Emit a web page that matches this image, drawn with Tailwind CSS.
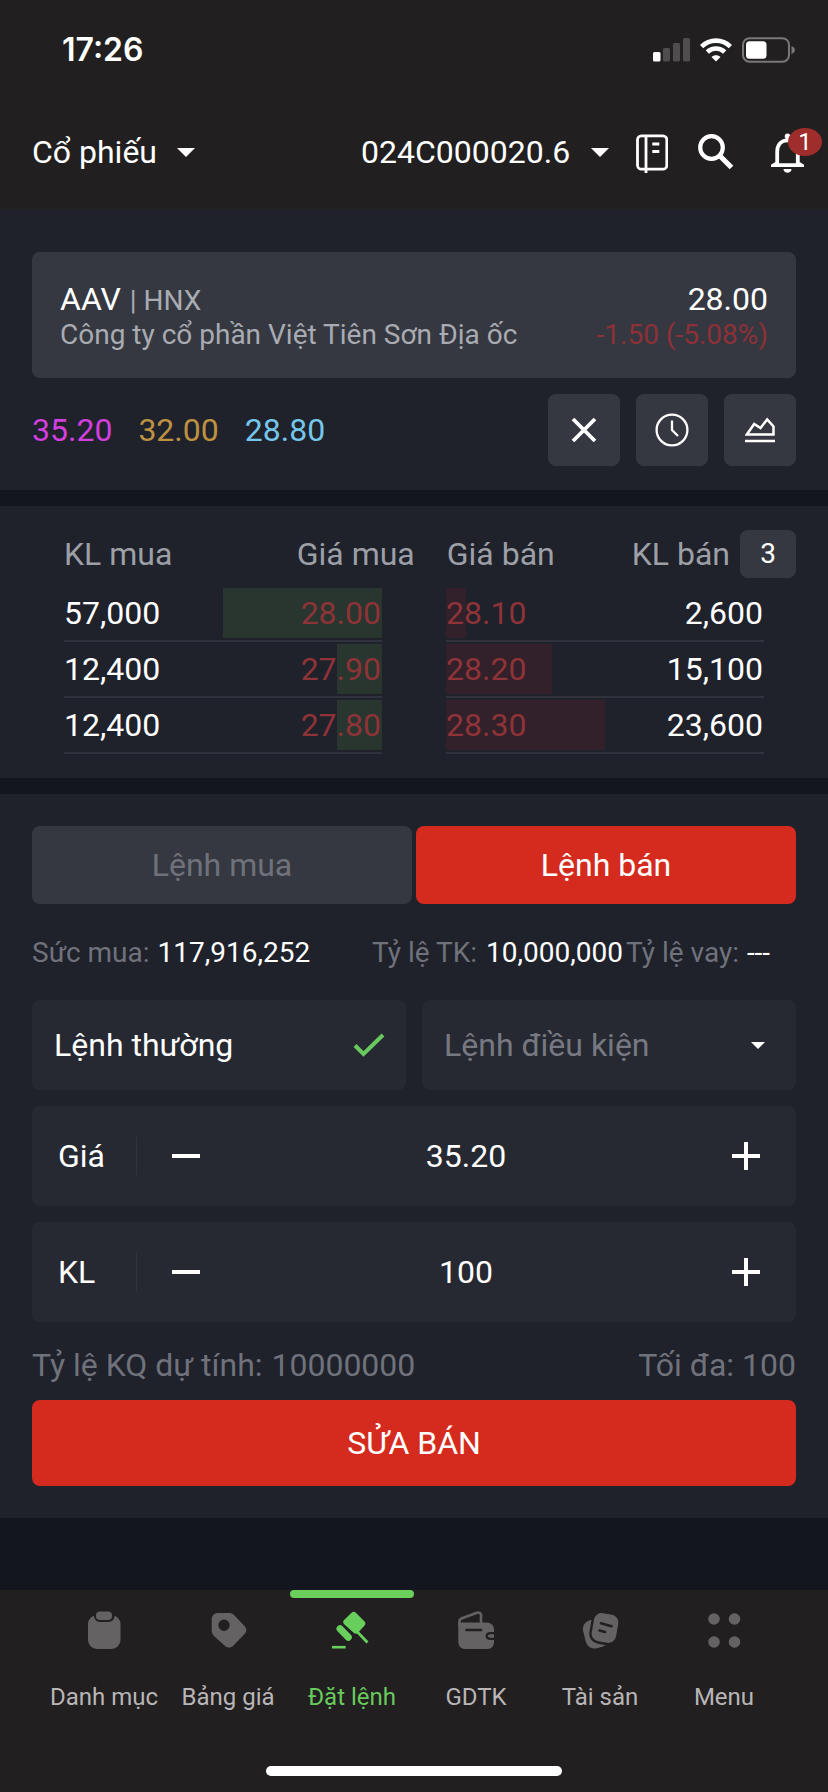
<!DOCTYPE html>
<html lang="vi">
<head>
<meta charset="utf-8">
<title>Đặt lệnh</title>
<script src="https://cdn.jsdelivr.net/npm/@tailwindcss/browser@4"></script>
</head>
<body class="flex h-[1792px] w-[828px] flex-col overflow-hidden bg-[#13151f] font-[Roboto,sans-serif] text-[32px] leading-none text-white">

<header class="h-[209px] shrink-0 bg-[#221f20]">
  <div class="flex h-[100px] items-center pl-[62px] pr-[33px]">
    <span class="font-[Inter,sans-serif] text-[32px] font-semibold">17:26</span>
    <div class="ml-auto flex items-center gap-[10px]">
      <svg class="h-[24px] w-[37px]" viewBox="0 0 37 24"><rect y="14" width="7.5" height="9.5" rx="1.5" fill="#fff"/><g fill="#504d4e"><rect x="10" y="10" width="7" height="13.5" rx="1.5"/><rect x="20" y="5" width="7" height="18.5" rx="1.5"/><rect x="30" y="0" width="7" height="23.5" rx="1.5"/></g></svg>
      <svg class="h-[24px] w-[32px]" viewBox="0 0 32 24" fill="none" stroke="#fff" stroke-width="4.6"><path d="M1.6 8.6C9.6.6 22.400.6 30.400 8.600"/><path d="M7.300 14C12.200 9.400 19.800 9.400 24.700 14"/><path d="M16 23.500 11.500 18.900C14 16.800 18 16.800 20.500 18.900Z" fill="#fff" stroke="none"/></svg>
      <svg class="h-[26px] w-[53px]" viewBox="0 0 53 26"><rect x="1" y="1.200" width="46" height="23.500" rx="6.500" fill="none" stroke="#7a7778" stroke-width="2"/><rect x="4" y="4.200" width="20.500" height="17.500" rx="3.500" fill="#fff"/><path d="M49.500 9C54 10.500 54 15.500 49.500 17Z" fill="#7a7778"/></svg>
    </div>
  </div>
  <div class="flex h-[104px] items-center pl-[32px]">
    <span class="w-[145px]">Cổ phiếu</span>
    <svg class="h-[9px] w-[18px]" viewBox="0 0 18 9" fill="#fff"><path d="M0 0H18L9 9Z"/></svg>
    <span class="ml-[166px] w-[230px]">024C000020.6</span>
    <svg class="h-[9px] w-[18px]" viewBox="0 0 18 9" fill="#fff"><path d="M0 0H18L9 9Z"/></svg>
    <svg class="ml-[27px] mt-[4px] h-[40px] w-[32px]" viewBox="0 0 32 40" fill="none" stroke="#fff" stroke-width="2.800"><rect x="1.500" y="1.800" width="29.300" height="33.400" rx="4"/><path d="M10 1.500V39M16.300 10H23.300M16.300 17.500H23.300" stroke-width="2.800"/></svg>
    <svg class="ml-[30px] h-[36px] w-[36px]" viewBox="0 0 36 36" fill="none" stroke="#fff"><circle cx="13.500" cy="13.500" r="11.300" stroke-width="4.200"/><path d="M22 22 33.500 33.500" stroke-width="5.200"/></svg>
    <div class="relative ml-[37px] mt-[2px] h-[40px] w-[33px]">
      <svg class="h-[40px] w-[33px]" viewBox="0 0 33 40"><path d="M16.500 3V9M16.500 7.300C10 7.300 6.200 12 6.200 19V30L2.800 32.200H30.200L26.800 30V19C26.800 12 23 7.300 16.500 7.300Z" fill="none" stroke="#fff" stroke-width="3.800"/><circle cx="16.500" cy="3.200" r="2.700" fill="#fff"/><path d="M12.500 36H20.500C20.500 41 12.500 41 12.500 36Z" fill="#fff"/></svg>
      <span class="absolute -top-[5px] left-[17px] flex h-[28px] w-[34px] items-center justify-center rounded-[50%] bg-[#9e2d2b] text-[24px]">1</span>
    </div>
  </div>
</header>

<section class="h-[281px] shrink-0 bg-[#1f212b] px-8 pt-[43px]">
  <div class="flex h-[126px] flex-col rounded-lg bg-[#363841] px-7 pt-[29px]">
    <div class="flex h-[36px] items-center justify-between"><span>AAV <span class="ml-px text-[28px] text-[#a9abb2]">| HNX</span></span><span>28.00</span></div>
    <div class="flex h-[36px] items-center justify-between text-[28px] text-[#a9abb2]"><span>Công ty cổ phần Việt Tiên Sơn Địa ốc</span><span class="text-[#8d3038]">-1.50 (-5.08%)</span></div>
  </div>
  <div class="mt-4 flex h-[72px] items-center">
    <div class="flex gap-[26px]"><span class="text-[#d23fdf]">35.20</span><span class="text-[#bd9142]">32.00</span><span class="text-[#74c7ea]">28.80</span></div>
    <div class="ml-auto flex gap-4">
      <div class="flex size-[72px] items-center justify-center rounded-lg bg-[#363841]"><svg class="size-[26px]" viewBox="0 0 26 26" stroke="#fff" stroke-width="3.800"><path d="M2 2 24 24M24 2 2 24"/></svg></div>
      <div class="flex size-[72px] items-center justify-center rounded-lg bg-[#363841]"><svg class="size-[34px]" viewBox="0 0 34 34" fill="none" stroke="#fff" stroke-width="2.300"><circle cx="17" cy="17" r="15.400"/><path d="M17 7.500V17L23 23"/></svg></div>
      <div class="flex size-[72px] items-center justify-center rounded-lg bg-[#363841]"><svg class="h-[26px] w-[30px]" viewBox="0 0 30 26" fill="none" stroke="#fff" stroke-width="2.500"><path d="M1.800 17.500 9.200 7 15.500 11 22.200 2.500 28.500 9.500V17.500ZM0 24H30"/></svg></div>
    </div>
  </div>
</section>

<section class="mt-4 h-[272px] shrink-0 bg-[#1f212b] px-8 pt-[24px]">
  <div class="flex h-[48px] items-center text-[#9d9fa7]">
    <span class="pl-8">KL mua</span><span class="ml-auto">Giá mua</span>
    <span class="ml-8">Giá bán</span><span class="ml-[77px]">KL bán</span>
    <span class="ml-[10px] flex h-12 w-14 items-center justify-center rounded-lg bg-[#363841] text-[28px] text-white">3</span>
  </div>
  <div class="mt-[10px] grid grid-cols-2 gap-x-16 gap-y-[2px] px-8">
    <div class="flex h-[54px] items-start justify-between border-b-2 border-[#30323d]"><span class="flex h-[50px] items-center">57,000</span><div class="flex h-[50px] w-[159px] items-center justify-end bg-[#29352f] pr-px text-[#8e3337]">28.00</div></div>
    <div class="flex h-[54px] items-start justify-between border-b-2 border-[#30323d]"><div class="flex h-[50px] w-[20px] items-center bg-[#32212a] text-[#8e3337]">28.10</div><span class="flex h-[50px] items-center pr-px">2,600</span></div>
    <div class="flex h-[54px] items-start justify-between border-b-2 border-[#30323d]"><span class="flex h-[50px] items-center">12,400</span><div class="flex h-[50px] w-[45px] items-center justify-end bg-[#29352f] pr-px text-[#8e3337]">27.90</div></div>
    <div class="flex h-[54px] items-start justify-between border-b-2 border-[#30323d]"><div class="flex h-[50px] w-[106px] items-center bg-[#32212a] text-[#8e3337]">28.20</div><span class="flex h-[50px] items-center pr-px">15,100</span></div>
    <div class="flex h-[54px] items-start justify-between border-b-2 border-[#30323d]"><span class="flex h-[50px] items-center">12,400</span><div class="flex h-[50px] w-[45px] items-center justify-end bg-[#29352f] pr-px text-[#8e3337]">27.80</div></div>
    <div class="flex h-[54px] items-start justify-between border-b-2 border-[#30323d]"><div class="flex h-[50px] w-[159px] items-center bg-[#32212a] text-[#8e3337]">28.30</div><span class="flex h-[50px] items-center pr-px">23,600</span></div>
  </div>
</section>

<section class="mt-4 h-[724px] shrink-0 bg-[#1f212b] px-8 pt-8">
  <div class="grid h-[78px] grid-cols-2 gap-1">
    <div class="flex items-center justify-center rounded-lg bg-[#363841] text-[#70727b]">Lệnh mua</div>
    <div class="flex items-center justify-center rounded-lg bg-[#d52b1e]">Lệnh bán</div>
  </div>
  <div class="mt-[31px] flex h-[36px] items-center whitespace-nowrap text-[28px] text-[#70727b]">
    <div class="w-[340px]">Sức mua: <span class="ml-px text-white">117,916,252</span></div>
    <div class="w-[254px]">Tỷ lệ TK: <span class="ml-[2px] text-white">10,000,000</span></div>
    <div>Tỷ lệ vay: <span class="ml-px text-white">---</span></div>
  </div>
  <div class="mt-[29px] grid h-[90px] grid-cols-2 gap-4">
    <div class="flex items-center justify-between rounded-lg bg-[#272932] pl-[22px] pr-[21px]"><span>Lệnh thường</span><svg class="h-[24px] w-[32px]" viewBox="0 0 32 24" fill="none" stroke="#68c95c" stroke-width="4"><path d="M2 12.500 10.500 21 30 2"/></svg></div>
    <div class="flex items-center justify-between rounded-lg bg-[#272932] pl-[22px] pr-[31px]"><span class="text-[#777982]">Lệnh điều kiện</span><svg class="h-[7px] w-[14px]" viewBox="0 0 14 7" fill="#fff"><path d="M0 0H14L7 7Z"/></svg></div>
  </div>
  <div class="mt-4 flex h-[100px] items-center rounded-lg bg-[#272932] pl-[26px] pr-9">
    <span class="w-[78px]">Giá</span><div class="h-[38px] w-px bg-[#31333d]"></div><div class="ml-[35px] h-1 w-7 bg-white"></div>
    <span class="flex-1 text-center">35.20</span>
    <svg class="size-7" viewBox="0 0 28 28" fill="#fff"><path d="M12 0H16V12H28V16H16V28H12V16H0V12H12Z"/></svg>
  </div>
  <div class="mt-4 flex h-[100px] items-center rounded-lg bg-[#272932] pl-[26px] pr-9">
    <span class="w-[78px]">KL</span><div class="h-[38px] w-px bg-[#31333d]"></div><div class="ml-[35px] h-1 w-7 bg-white"></div>
    <span class="flex-1 text-center">100</span>
    <svg class="size-7" viewBox="0 0 28 28" fill="#fff"><path d="M12 0H16V12H28V16H16V28H12V16H0V12H12Z"/></svg>
  </div>
  <div class="mt-[25px] flex h-[36px] items-center justify-between text-[#70727b]"><span>Tỷ lệ KQ dự tính: <span class="ml-px">10000000</span></span><span>Tối đa: 100</span></div>
  <div class="mt-[17px] flex h-[86px] items-center justify-center rounded-lg bg-[#d52b1e]">SỬA BÁN</div>
</section>

<nav class="mt-[72px] flex h-[202px] shrink-0 flex-col items-center bg-[#221f20]">
  <div class="grid w-[744px] grid-cols-6 text-[24px] text-[#b8b5b6]">
    <div class="flex flex-col items-center"><div class="h-2 w-full"></div>
      <svg class="mt-[12px] h-[40px] w-[36px]" viewBox="0 0 36 40" fill="#656263"><rect x="2" y="5" width="32.500" height="34" rx="9"/><rect x="8" y="-1" width="20.500" height="13" rx="6" fill="#221f20"/><rect x="10" y="1.500" width="16" height="8.500" rx="4"/></svg>
      <span class="mt-[33px] whitespace-nowrap leading-[28px]">Danh mục</span></div>
    <div class="flex flex-col items-center"><div class="h-2 w-full"></div>
      <svg class="mt-[12px] h-[40px] w-[38px]" viewBox="0 0 38 40"><path fill="#656263" fill-rule="evenodd" d="M10 3H20C22 3 23.500 3.600 25 5L35.500 16C38 18.700 38 21.300 35.500 24L24.500 35.500C21.700 38.300 18.300 38.300 15.500 35.500L5 26C3.500 24.500 2.700 22.800 2.700 20.500V10C2.700 5.500 5 3 10 3ZM15 9.600A5.700 5.700 0 1 0 15 21A5.700 5.700 0 1 0 15 9.600Z"/></svg>
      <span class="mt-[33px] whitespace-nowrap leading-[28px]">Bảng giá</span></div>
    <div class="flex flex-col items-center text-[#68c95c]"><div class="h-2 w-full rounded-full bg-[#6bcf5b]"></div>
      <svg class="mt-[12px] h-[40px] w-[38px] overflow-visible" viewBox="0 0 38 40" fill="#68cf5c" stroke="#68cf5c"><path d="M20.800 5.200 29 13.600 22.800 20.200 13.600 12Z" stroke-width="6.500" stroke-linejoin="round"/><path d="M7 18.800 15.300 27.200" stroke-width="7" stroke-linecap="round"/><path d="M23.500 21 34.500 32.500" stroke-width="2.800"/><path d="M-1 37.200H12.700" stroke-width="2.600"/></svg>
      <span class="mt-[33px] whitespace-nowrap leading-[28px]">Đặt lệnh</span></div>
    <div class="flex flex-col items-center"><div class="h-2 w-full"></div>
      <svg class="mt-[12px] h-[40px] w-[36px]" viewBox="0 0 36 40"><path d="M1.500 16V11C1.500 9.500 2.500 8.800 4 8.200L19 2.800C21 2 23 3 23 5V14" fill="none" stroke="#656263" stroke-width="2.600"/><path fill="#656263" d="M.3 12.500H28.500C33 12.500 36 15.500 36 19.500V32C36 36 33.500 39 29.500 39H7C3 39 .3 36 .3 32Z"/><path d="M8.500 20H23" stroke="#221f20" stroke-width="2.600" stroke-linecap="round"/><path d="M36.500 23.200H32.500C30 23.200 28.700 24.300 28.700 26C28.700 27.700 30 28.800 32.500 28.800H36.500" fill="#656263" stroke="#221f20" stroke-width="2.200"/></svg>
      <span class="mt-[33px] whitespace-nowrap leading-[28px]">GDTK</span></div>
    <div class="flex flex-col items-center"><div class="h-2 w-full"></div>
      <svg class="mt-[12px] h-[40px] w-[38px]" viewBox="0 0 38 40" fill="#656263"><rect x="3" y="9" width="24" height="29" rx="9" transform="rotate(-14 15 23)"/><rect x="10.500" y="2.500" width="27" height="31" rx="9" transform="rotate(10 24 18)" stroke="#221f20" stroke-width="2.400"/><path d="M20 13.300 30.500 16.200M18.500 20.500 24 22" stroke="#221f20" stroke-width="2.600" stroke-linecap="round"/></svg>
      <span class="mt-[33px] whitespace-nowrap leading-[28px]">Tài sản</span></div>
    <div class="flex flex-col items-center"><div class="h-2 w-full"></div>
      <svg class="mt-[12px] h-[40px] w-[34px]" viewBox="0 0 34 40" fill="#656263"><circle cx="7" cy="9" r="5.800"/><circle cx="27.500" cy="9" r="5.800"/><circle cx="7" cy="32" r="5.800"/><circle cx="27.500" cy="32" r="5.800"/></svg>
      <span class="mt-[33px] whitespace-nowrap leading-[28px]">Menu</span></div>
  </div>
  <div class="mb-4 mt-auto h-[10px] w-[296px] rounded-full bg-white"></div>
</nav>
</body>
</html>
